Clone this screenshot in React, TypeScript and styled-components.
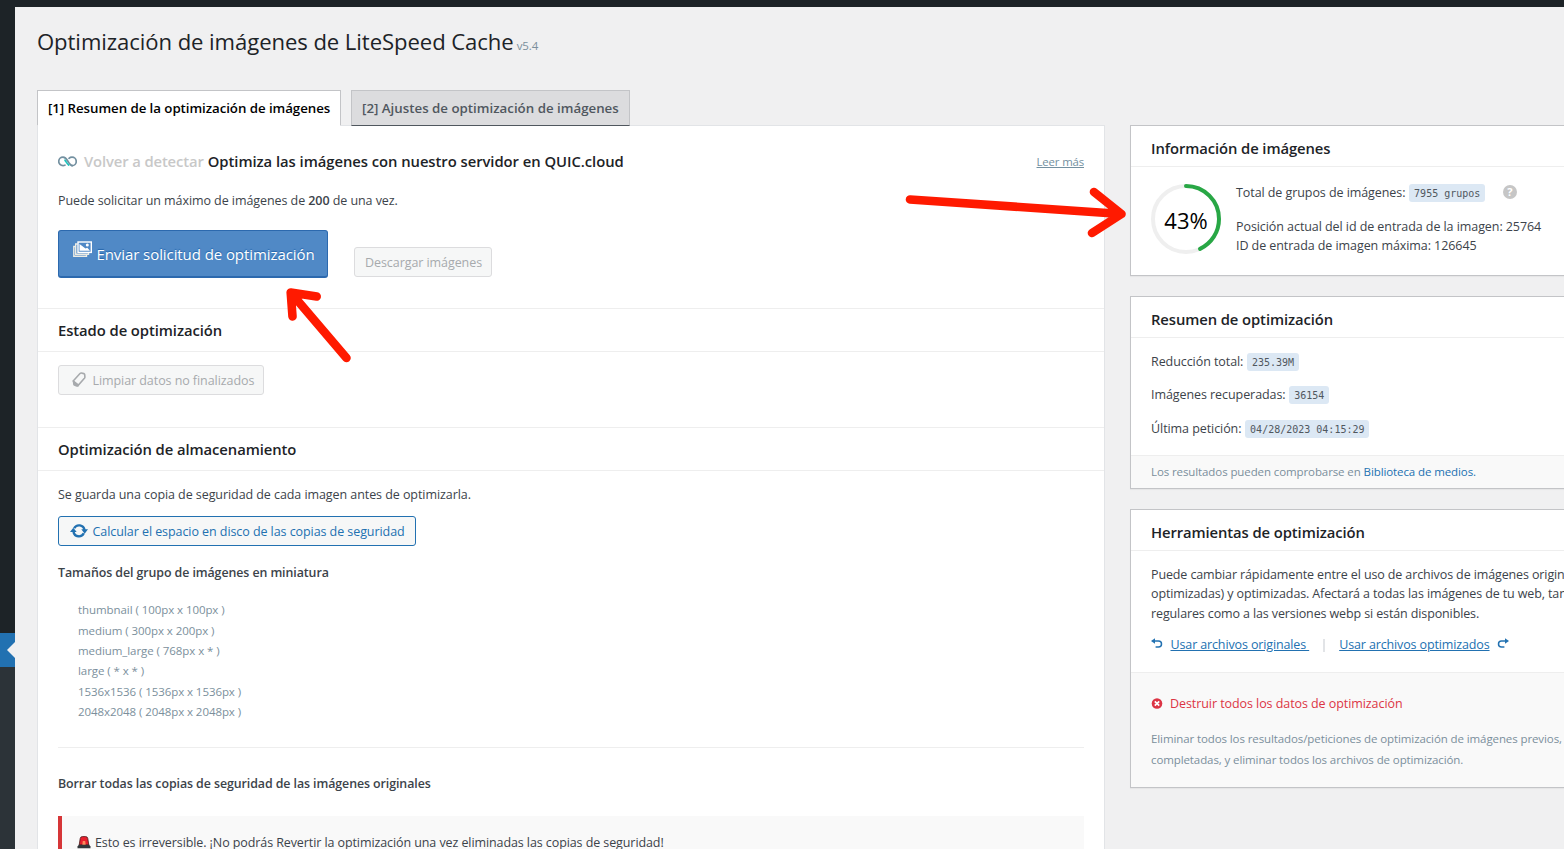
import React from "react";
import styled, { createGlobalStyle } from "styled-components";

const Global = createGlobalStyle`
  * { box-sizing: border-box; }
  body { margin: 0; background: #f0f0f1; overflow: hidden; }
  h1, h2, h3, p, ul { margin: 0; padding: 0; font-weight: inherit; font-size: inherit; }
`;

const Page = styled.div`
  position: relative;
  width: 1564px;
  height: 849px;
  overflow: hidden;
  display: grid;
  grid-template: 7px 1fr / 15px 1fr;
  background: #f0f0f1;
  color: #3c434a;
  font: 400 12.5px/20px "Open Sans", "Noto Sans", sans-serif;
  letter-spacing: -0.07px;
`;
const AdminBar = styled.div`
  grid-column: 1 / 3;
  background: #1d2327;
`;
const Menu = styled.nav`
  display: flex;
  flex-direction: column;
  background: #1d2327;
`;
const MenuGap = styled.div`
  height: 626px;
`;
const MenuCurrent = styled.div`
  height: 34px;
  background: #2271b1;
  display: flex;
  align-items: center;
  justify-content: flex-end;
  &::after {
    content: "";
    border: 8px solid transparent;
    border-left: 0;
    border-right-color: #f0f0f1;
  }
`;
const SubMenu = styled.div`
  flex: 1;
  background: #2c3338;
`;
const Content = styled.main`
  padding: 20px 0 0 22px;
  min-width: 0;
  min-height: 0;
`;
const Title = styled.h1`
  display: flex;
  align-items: baseline;
  gap: 3px;
  height: 63px;
  font-size: 22.1px;
  line-height: 28px;
  color: #1d2327;
  white-space: nowrap;
`;
const Version = styled.span`
  font-size: 11.5px;
  color: #7b8f9c;
`;
const Tabs = styled.div`
  position: relative;
  display: flex;
  gap: 10px;
  margin-bottom: -1px;
`;
const Tab = styled.a<{ $active?: boolean; $w: number }>`
  width: ${(p) => p.$w}px;
  height: 36px;
  padding-left: 10px;
  border: 1px solid #c3c4c7;
  border-bottom-color: ${(p) => (p.$active ? "#fff" : "#50575e")};
  background: ${(p) => (p.$active ? "#fff" : "#dcdcde")};
  color: ${(p) => (p.$active ? "#000" : "#50575e")};
  font-size: 13.3px;
  font-weight: 600;
  letter-spacing: ${(p) => (p.$active ? -0.06 : 0)}px;
  line-height: 34px;
  white-space: nowrap;
`;
const Columns = styled.div`
  display: flex;
  align-items: flex-start;
  gap: 25px;
`;
const Main = styled.section`
  width: 1068px;
  height: 760px;
  flex: none;
  border: 1px solid #e2e4e7;
  background: #fff;
`;
const Block = styled.div`
  padding: 0 20px;
  white-space: nowrap;
`;
const Intro = styled.h2`
  display: flex;
  align-items: center;
  margin-top: 23px;
  height: 24px;
  font-size: 14.8px;
  font-weight: 600;
  letter-spacing: -0.04px;
  color: #1d2327;
`;
const Redetect = styled.span`
  margin: 0 4px 0 7px;
  color: #c8c8c8;
  letter-spacing: -0.12px;
`;
const More = styled.a`
  margin: 1px 0 0 auto;
  font-size: 11.4px;
  font-weight: 400;
  letter-spacing: -0.15px;
  color: #7390a0;
  text-decoration: underline;
`;
const Para = styled.p<{ $mt: number }>`
  margin-top: ${(p) => p.$mt}px;
  white-space: nowrap;
`;
const Strong = styled.b`
  font-weight: 600;
`;
const SubHead = styled.h3<{ $mt: number }>`
  margin-top: ${(p) => p.$mt}px;
  font-size: 12.4px;
  font-weight: 600;
  letter-spacing: -0.08px;
`;
const Actions = styled.div`
  display: flex;
  align-items: flex-end;
  gap: 26px;
  margin: 19px 0 30px;
  height: 48px;
`;
const Primary = styled.button`
  display: flex;
  align-items: center;
  width: 270px;
  height: 48px;
  padding: 0 0 0 14px;
  border: 1px solid #2c69ae;
  border-bottom-width: 2px;
  border-radius: 3px;
  background: #5089c6;
  color: #fff;
  font: inherit;
  font-size: 15px;
  letter-spacing: -0.08px;
  text-shadow: 0 -1px 1px #2264ab;
  white-space: nowrap;
  svg { margin: -9px 4.5px 0 0; }
`;
const Button = styled.button<{ $w: number; $off?: boolean; $mb?: number; $mt?: number; $icon?: boolean }>`
  display: flex;
  align-items: center;
  width: ${(p) => p.$w}px;
  height: 30px;
  margin: ${(p) => p.$mt ?? 0}px 0 ${(p) => p.$mb ?? 0}px;
  padding: 2px 0 0 ${(p) => (p.$icon ? 11 : 10)}px;
  border: 1px solid ${(p) => (p.$off ? "#dcdcde" : "#2271b1")};
  border-radius: 3px;
  background: #f6f7f7;
  color: ${(p) => (p.$off ? "#a7aaad" : "#2271b1")};
  font: inherit;
  letter-spacing: inherit;
  white-space: nowrap;
  svg { margin: -3px 4.5px 0 0; }
`;
const SectionTitle = styled.h2`
  height: 44px;
  padding: 0 20px;
  border: solid #eee;
  border-width: 1px 0;
  color: #1d2327;
  font-size: 14.8px;
  font-weight: 600;
  line-height: 43px;
`;
const Sizes = styled.ul`
  margin: 17.1px 0 24.9px 20px;
  list-style: none;
  font-size: 11.5px;
  line-height: 20.4px;
  color: #7b8f9c;
`;
const Rule = styled.div`
  height: 1px;
  background: #eee;
`;
const Callout = styled.div`
  display: flex;
  gap: 4px;
  margin-top: 22px;
  height: 60px;
  padding: 17px 0 0 15px;
  border-left: 4px solid #d63638;
  background: #f9f9f9;
  letter-spacing: -0.09px;
  svg { margin-top: 3px; }
`;
const Side = styled.aside`
  display: flex;
  flex-direction: column;
  gap: 20px;
  width: 460px;
  flex: none;
`;
const Card = styled.section<{ $h: number }>`
  display: flex;
  flex-direction: column;
  height: ${(p) => p.$h}px;
  border: 1px solid #c3c4c7;
  background: #fff;
  box-shadow: 0 1px 1px rgba(0, 0, 0, 0.04);
  white-space: nowrap;
`;
const CardTitle = styled.h2`
  height: 41px;
  padding-left: 20px;
  border-bottom: 1px solid #eee;
  color: #1d2327;
  font-size: 14.8px;
  font-weight: 600;
  letter-spacing: -0.09px;
  line-height: 44px;
`;
const Info = styled.div`
  display: flex;
  gap: 15px;
  padding: 15px 0 0 20px;
`;
const Gauge = styled.div`
  position: relative;
  width: 70px;
  height: 72px;
  padding-top: 2px;
`;
const GaugeText = styled.span`
  position: absolute;
  inset: 1px 0 0;
  text-align: center;
  font-size: 22px;
  letter-spacing: 0;
  line-height: 74px;
  color: #000;
`;
const Code = styled.code`
  display: inline-block;
  height: 18px;
  margin-left: 0.5px;
  padding: 0 5px;
  border-radius: 3px;
  background: #dce8f4;
  color: #50575e;
  font: 10px/19px "DejaVu Sans Mono", monospace;
  letter-spacing: 0;
`;
const Help = styled.span`
  display: inline-block;
  width: 14px;
  height: 14px;
  margin-left: 17.5px;
  border-radius: 50%;
  background: #c6c6c6;
  color: #fff;
  font-size: 11px;
  font-weight: 700;
  line-height: 14px;
  text-align: center;
  vertical-align: 1px;
`;
const Stats = styled.div`
  flex: 1;
  padding: 14px 0 0 20px;
`;
const Stat = styled.p`
  height: 33.4px;
`;
const Foot = styled.footer<{ $h: number }>`
  height: ${(p) => p.$h}px;
  padding: ${(p) => (p.$h > 50 ? 20 : 5)}px 0 0 20px;
  border-top: 1px solid #eee;
  background: #f9f9f9;
  font-size: 11.5px;
  letter-spacing: -0.1px;
  line-height: 21px;
  color: #7b8f9c;
`;
const Link = styled.a<{ $u?: boolean }>`
  color: #2271b1;
  letter-spacing: ${(p) => (p.$u ? "-0.13px" : "inherit")};
  text-decoration: ${(p) => (p.$u ? "underline" : "none")};
`;
const Tools = styled.div`
  flex: 1;
  padding: 13.9px 0 0 20px;
  line-height: 19.5px;
`;
const ToolText = styled.p`
  letter-spacing: -0.12px;
`;
const ToolLinks = styled.div`
  display: flex;
  align-items: center;
  margin-top: 12px;
  line-height: 20px;
  svg { margin-top: -3px; }
  svg:first-child { margin-right: 7.5px; }
  svg:last-child { margin-left: 7.5px; }
`;
const Divider = styled.i`
  width: 2px;
  height: 13px;
  margin: 0 14px;
  background: #e2e4e7;
`;
const Danger = styled.div`
  display: flex;
  align-items: center;
  gap: 7px;
  height: 21px;
  margin-bottom: 14px;
  font-size: 12.5px;
  letter-spacing: -0.07px;
  color: #dc3545;
`;
const Arrows = styled.svg`
  position: absolute;
  inset: 0;
  pointer-events: none;
`;

const LoopIcon = () => (
  <svg width="19" height="11" viewBox="0 0 19 11" fill="none" strokeWidth="1.7" strokeLinecap="round">
    <path d="M7 9.100c-.6.400-1.300.6-2 .6a4.200 4.200 0 0 1 0-8.500c3.300 0 4.300 3.400 6 5.800.9 1.400 1.800 2.500 3.400 2.600" stroke="#7390a0" />
    <path d="M11 2.300c.8-.7 1.800-1.100 3-1.100a4.200 4.200 0 0 1 0 8.500" stroke="#7390a0" />
    <path d="M7 4.200c1.200 1.500 1.900 3.600 3.700 4.800" stroke="#1fc4be" />
  </svg>
);
const ImagesIcon = () => (
  <svg width="19" height="16" viewBox="0 0 19 16" fill="none" stroke="#fff" strokeWidth="1.4">
    <path d="M2.500 5.500H.8V15.200H13.500V13.800M4.500 3H2.700V13.300H15.500V12" stroke="#ecece4" />
    <rect x="5" y="1" width="13.300" height="10.400" />
    <path d="M6.500 9.800V3l6 4.500 1.800-.8 2.700 3.100z" fill="#fff" stroke="none" />
    <circle cx="14.300" cy="4" r="1.500" fill="#fff" stroke="none" />
  </svg>
);
const EraserIcon = () => (
  <svg width="18" height="18" viewBox="0 0 18 18">
    <path d="M3.200 10 10 2.500q.6-.6 1.400-.5l2.400.6q.8.300.9 1.100l.2 2.300q0 .7-.5 1.300L8 14.600z" fill="none" stroke="#a7aaad" strokeWidth="1.600" />
    <path d="M3 9 8.300 13l.1 2.400q-.8.600-1.800.3l-2.500-.9q-.9-.4-1-1.300l-.3-2.500z" fill="#a7aaad" />
  </svg>
);
const SyncIcon = () => (
  <svg width="18" height="16" viewBox="0 0 18 16" fill="none" stroke="#2271b1" strokeWidth="2.400">
    <path d="M4.200 5.300A5.500 5.500 0 0 1 14.500 7M13.800 10.300A5.500 5.500 0 0 1 3.500 9" />
    <path d="M11.300 6.300h6.700L14.700 10.700zM0 8.900h6.700L3.300 4.800z" fill="#2271b1" stroke="none" />
  </svg>
);
const Bend = ({ flip }: { flip?: boolean }) => (
  <svg width="12" height="11" viewBox="0 0 12 11" fill="none" stroke="#2271b1" strokeWidth="1.500">
    <g transform={flip ? "translate(12 0) scale(-1 1)" : undefined}>
      <path d="M2.500 3H7.500a3 3 0 0 1 0 6H4.600" />
      <path d="M0 3 4 .3V5.700z" fill="#2271b1" stroke="none" />
    </g>
  </svg>
);
const CrossIcon = () => (
  <svg width="12" height="12" viewBox="0 0 12 12">
    <circle cx="6" cy="5.500" r="5.300" fill="#dc3545" />
    <path d="m3.800 3.300 4.400 4.400m0-4.400-4.400 4.400" stroke="#fff" strokeWidth="1.700" />
  </svg>
);
const SirenIcon = () => (
  <svg width="14" height="13" viewBox="0 0 14 13">
    <path d="M2.200 9 3.200 2.500Q3.500.6 5.400.6h3.200q1.900 0 2.200 1.900L11.800 9z" fill="#e8202e" stroke="#4a1a1c" strokeWidth=".8" />
    <path d="M5.300 9 5.800 5h2.400l.5 4z" fill="#ff8a5c" />
    <path d="M1.800 8.800h10.400l1.300 1.800v1.600H.5v-1.600z" fill="#33373b" />
  </svg>
);

const sizes = [
  "thumbnail ( 100px x 100px )",
  "medium ( 300px x 200px )",
  "medium_large ( 768px x * )",
  "large ( * x * )",
  "1536x1536 ( 1536px x 1536px )",
  "2048x2048 ( 2048px x 2048px )",
];

export default function App() {
  return (
    <Page>
      <Global />
      <AdminBar />
      <Menu>
        <MenuGap />
        <MenuCurrent />
        <SubMenu />
      </Menu>
      <Content>
        <Title>
          <span>Optimización de imágenes de LiteSpeed Cache</span>
          <Version>v5.4</Version>
        </Title>
        <Tabs>
          <Tab $active $w={304}>[1] Resumen de la optimización de imágenes</Tab>
          <Tab $w={279}>[2] Ajustes de optimización de imágenes</Tab>
        </Tabs>
        <Columns>
          <Main>
            <Block>
              <Intro>
                <LoopIcon />
                <Redetect>Volver a detectar</Redetect>
                <span>Optimiza las imágenes con nuestro servidor en QUIC.cloud</span>
                <More>Leer más</More>
              </Intro>
              <Para $mt={18}>
                Puede solicitar un máximo de imágenes de <Strong>200</Strong> de una vez.
              </Para>
              <Actions>
                <Primary>
                  <ImagesIcon />
                  <span>Enviar solicitud de optimización</span>
                </Primary>
                <Button $w={138} $off $mb={1}>Descargar imágenes</Button>
              </Actions>
            </Block>
            <SectionTitle>Estado de optimización</SectionTitle>
            <Block>
              <Button $w={206} $off $icon $mt={13} $mb={32}>
                <EraserIcon />
                <span>Limpiar datos no finalizados</span>
              </Button>
            </Block>
            <SectionTitle>Optimización de almacenamiento</SectionTitle>
            <Block>
              <Para $mt={14}>Se guarda una copia de seguridad de cada imagen antes de optimizarla.</Para>
              <Button $w={358} $icon $mt={11}>
                <SyncIcon />
                <span>Calcular el espacio en disco de las copias de seguridad</span>
              </Button>
              <SubHead $mt={17}>Tamaños del grupo de imágenes en miniatura</SubHead>
              <Sizes>
                {sizes.map((s) => (
                  <li key={s}>{s}</li>
                ))}
              </Sizes>
              <Rule />
              <SubHead $mt={26}>Borrar todas las copias de seguridad de las imágenes originales</SubHead>
              <Callout>
                <SirenIcon />
                <span>Esto es irreversible. ¡No podrás Revertir la optimización una vez eliminadas las copias de seguridad!</span>
              </Callout>
            </Block>
          </Main>
          <Side>
            <Card $h={151}>
              <CardTitle>Información de imágenes</CardTitle>
              <Info>
                <Gauge>
                  <svg width="70" height="70" viewBox="0 0 70 70" fill="none" strokeWidth="4">
                    <circle cx="35" cy="35" r="33" stroke="#efefef" />
                    <circle cx="35" cy="35" r="33" stroke="#28a745" strokeLinecap="round" pathLength="100" strokeDasharray="43 57" transform="rotate(-90 35 35)" />
                  </svg>
                  <GaugeText>43%</GaugeText>
                </Gauge>
                <div>
                  <Para $mt={1}>
                    Total de grupos de imágenes: <Code>7955 grupos</Code>
                    <Help>?</Help>
                  </Para>
                  <Para $mt={14}>Posición actual del id de entrada de la imagen: 25764</Para>
                  <Para $mt={-1}>ID de entrada de imagen máxima: 126645</Para>
                </div>
              </Info>
            </Card>
            <Card $h={193}>
              <CardTitle>Resumen de optimización</CardTitle>
              <Stats>
                <Stat>Reducción total: <Code>235.39M</Code></Stat>
                <Stat>Imágenes recuperadas: <Code>36154</Code></Stat>
                <Stat>Última petición: <Code>04/28/2023 04:15:29</Code></Stat>
              </Stats>
              <Foot $h={33}>
                Los resultados pueden comprobarse en <Link>Biblioteca de medios.</Link>
              </Foot>
            </Card>
            <Card $h={279}>
              <CardTitle>Herramientas de optimización</CardTitle>
              <Tools>
                <ToolText>Puede cambiar rápidamente entre el uso de archivos de imágenes originales (no</ToolText>
                <ToolText>optimizadas) y optimizadas. Afectará a todas las imágenes de tu web, tanto a las</ToolText>
                <ToolText>regulares como a las versiones webp si están disponibles.</ToolText>
                <ToolLinks>
                  <Bend />
                  <Link $u>Usar archivos originales&nbsp;</Link>
                  <Divider />
                  <Link $u>Usar archivos optimizados</Link>
                  <Bend flip />
                </ToolLinks>
              </Tools>
              <Foot $h={115}>
                <Danger>
                  <CrossIcon />
                  <span>Destruir todos los datos de optimización</span>
                </Danger>
                <p>Eliminar todos los resultados/peticiones de optimización de imágenes previos,</p>
                <p>completadas, y eliminar todos los archivos de optimización.</p>
              </Foot>
            </Card>
          </Side>
        </Columns>
      </Content>
      <Arrows width="1564" height="849" fill="none" stroke="#ff1a00" strokeWidth="8.6" strokeLinecap="round" strokeLinejoin="round">
        <path d="M910 199.500 1121.500 214M1094 192 1121.500 214 1092 233" />
        <path d="M346.500 358 290.700 292.500M316.700 296.500 290.700 292.500 292.500 316.500" />
      </Arrows>
    </Page>
  );
}
